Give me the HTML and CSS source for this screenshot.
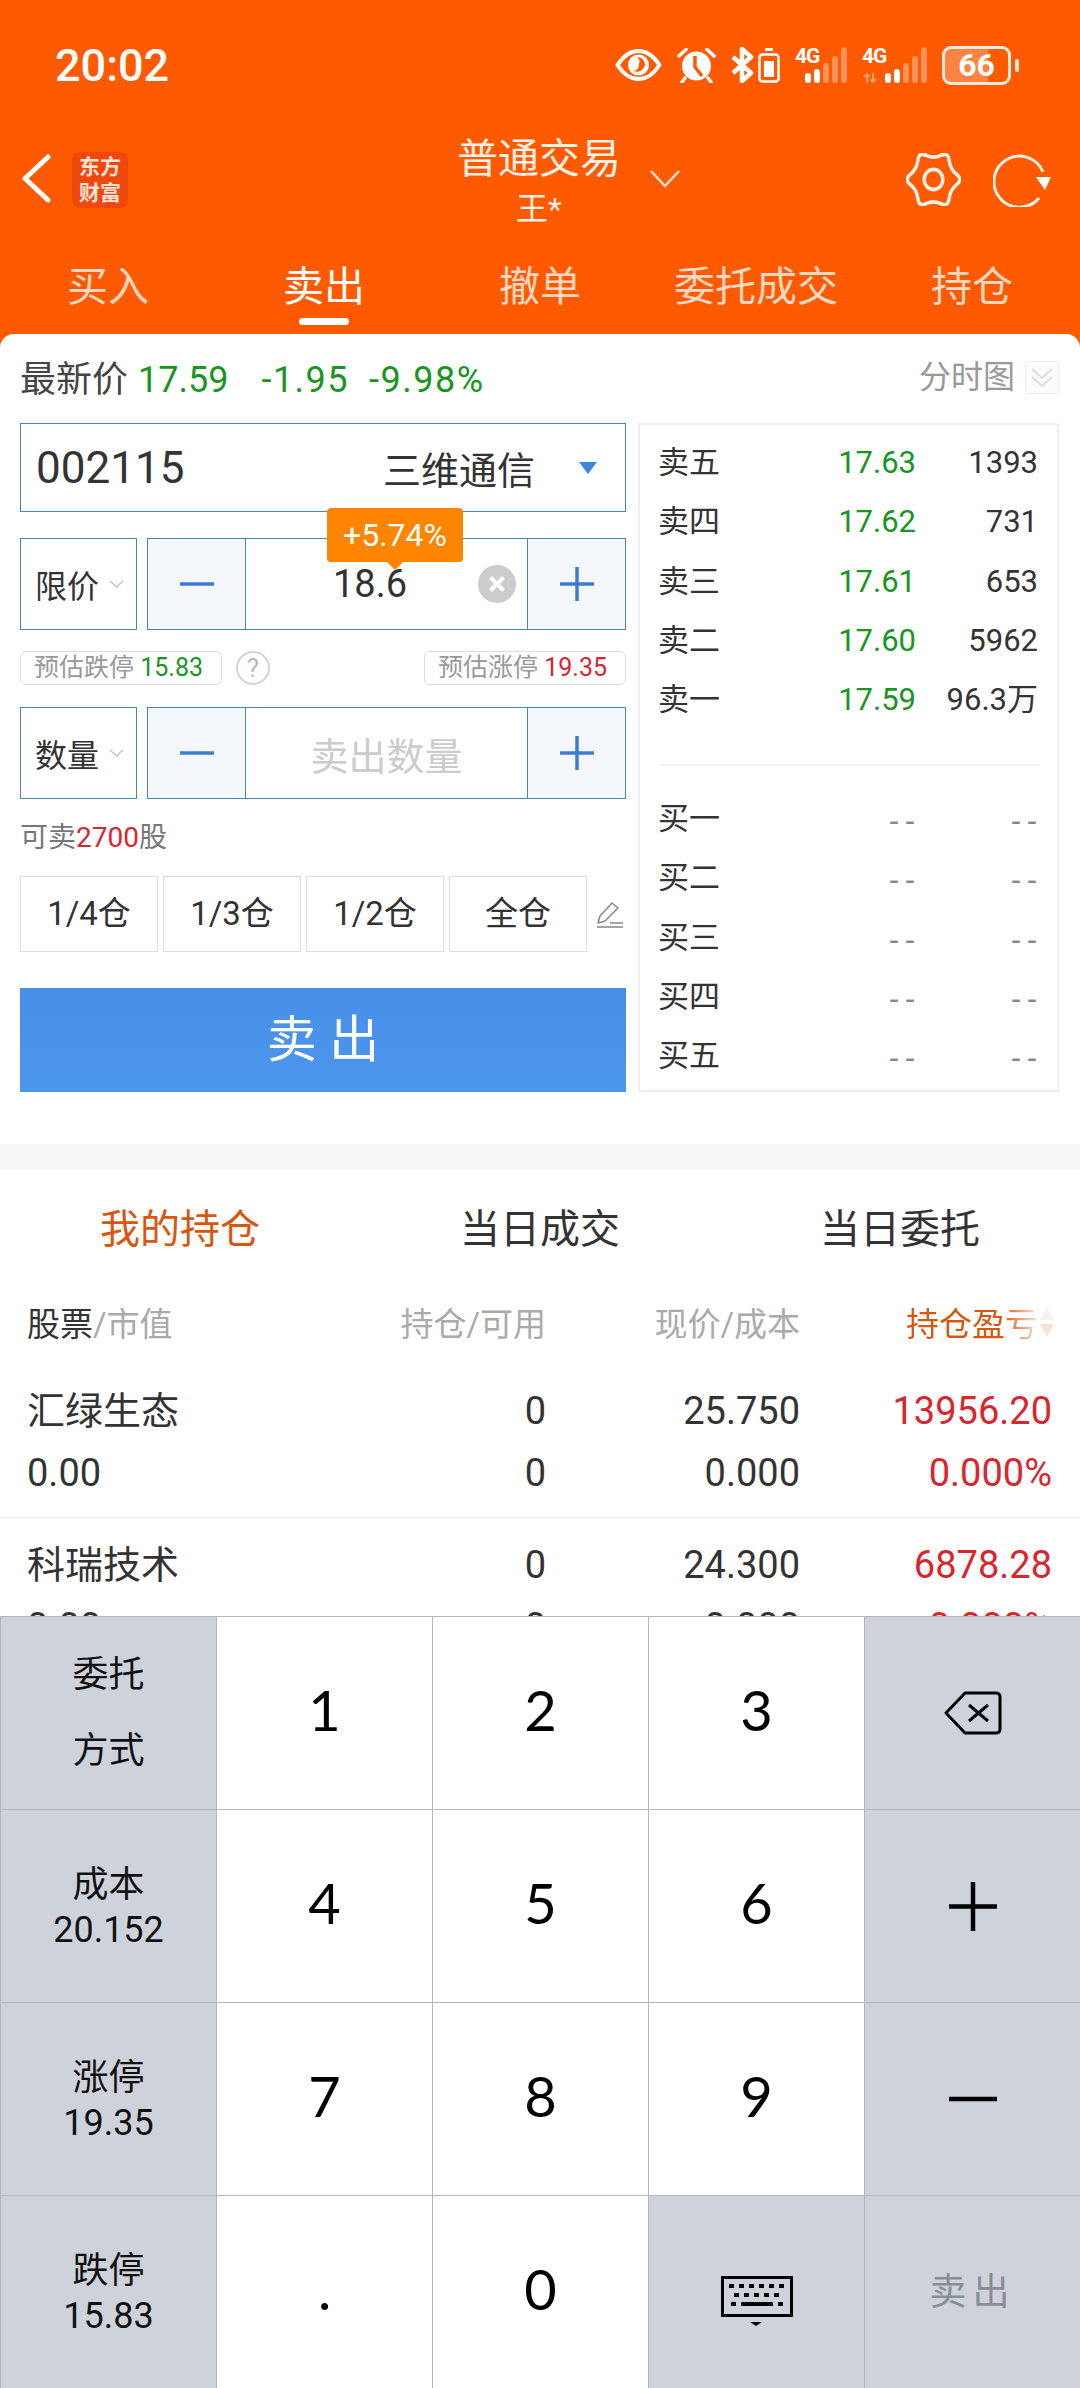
FILE: index.html
```html
<!DOCTYPE html>
<html lang="zh-CN">
<head>
    <meta charset="UTF-8">
    <meta name="viewport" content="width=device-width, initial-scale=1.0">
    <title>普通交易</title>
    <link rel="stylesheet" href="styles.css">
</head>
<body>

<div class="app">
    <div class="top">
        <div class="status">
            <div class="time">20:02</div>
            <div class="status-icons">
                <svg class="ic-eye" width="47" height="32" viewBox="0 0 47 32">
                    <path d="M2.5 16C9 6 16 2 23.5 2S38 6 44.500 16C38 26 31 30 23.500 30S9 26 2.500 16Z" fill="none" stroke="#fff" stroke-width="4" stroke-linejoin="round"/>
                    <circle cx="23.500" cy="16" r="10.500" fill="#fff"/>
                    <path d="M22 8a8 8 0 0 1 8 8 8 8 0 0 1-11 6 7 7 0 0 0 5-7 6 6 0 0 0-2-7Z" fill="#ff5a00"/>
                </svg>
                <svg class="ic-alarm" width="39" height="36" viewBox="0 0 39 36">
                    <circle cx="19.500" cy="19" r="14.500" fill="#fff"/>
                    <path d="M18 9v11l7 9" fill="none" stroke="#ff5a00" stroke-width="3.500"/>
                    <path d="M2 9 9 2.500M37 9 30 2.500M8 31l-3 4M31 31l3 4" fill="none" stroke="#fff" stroke-width="3.500" stroke-linecap="round"/>
                </svg>
                <div class="bt-group">
                    <svg width="23" height="36" viewBox="0 0 23 36">
                        <path d="M2 10 20 26 11 34V2l9 8L2 26" fill="none" stroke="#fff" stroke-width="4.500" stroke-linejoin="round"/>
                    </svg>
                    <svg width="22" height="36" viewBox="0 0 22 36">
                        <rect x="1.500" y="7.500" width="19" height="27" rx="3" fill="none" stroke="#fff" stroke-width="2.500"/>
                        <rect x="7" y="1" width="8" height="3" fill="#fff"/>
                        <rect x="6" y="14" width="10" height="16" fill="#fff"/>
                    </svg>
                </div>
                <div class="signal">
                    <span class="sig-label">4G</span>
                    <div class="bars">
                        <i class="b1"></i><i class="b2"></i><i class="b3 off"></i><i class="b4 off"></i><i class="b5 off"></i>
                    </div>
                </div>
                <div class="signal signal-two">
                    <span class="sig-label">4G</span>
                    <svg class="sig-arrows" width="14" height="10" viewBox="0 0 14 10">
                        <path d="M4 10V1M1 4 4 1 7 4M10 0V9M7 6 10 9 13 6" fill="none" stroke="#fff" stroke-opacity="0.4" stroke-width="2"/>
                    </svg>
                    <div class="bars">
                        <i class="b1"></i><i class="b2"></i><i class="b3 off"></i><i class="b4 off"></i><i class="b5 off"></i>
                    </div>
                </div>
                <div class="battery"><span>66</span></div>
            </div>
        </div>

        <div class="nav">
            <div class="nav-left">
                <svg width="30" height="50" viewBox="0 0 30 50">
                    <path d="M26 4 3 25.500 26 47" fill="none" stroke="#fff" stroke-width="5" stroke-linecap="round" stroke-linejoin="round"/>
                </svg>
                <div class="logo">东方<br>财富</div>
            </div>
            <div class="nav-title">
                <div class="title">普通交易</div>
                <div class="subtitle">王*</div>
            </div>
            <div class="nav-right">
                <svg class="title-arrow" width="30" height="18" viewBox="0 0 30 18">
                    <path d="M1 1 15 16 29 1" fill="none" stroke="#ffe3d2" stroke-width="2.500"/>
                </svg>
                <svg class="ic-gear" width="55" height="53" viewBox="-28 -25 56 50" preserveAspectRatio="none">
                    <path d="M23.450 -4.875Q30 0 23.450 4.875Q16.900 9.750 15.950 17.875Q15 26 7.500 22.750Q0 19.500 -7.500 22.750Q-15 26 -15.950 17.875Q-16.900 9.750 -23.450 4.875Q-30 0 -23.450 -4.875Q-16.900 -9.750 -15.950 -17.875Q-15 -26 -7.500 -22.750Q0 -19.500 7.500 -22.750Q15 -26 15.950 -17.875Q16.900 -9.750 23.450 -4.875Z" fill="none" stroke="#fff0e6" stroke-width="3.500"/>
                    <circle r="9.500" fill="none" stroke="#fff0e6" stroke-width="3.500"/>
                </svg>
                <svg class="ic-refresh" width="58" height="54" viewBox="0 0 58 54">
                    <path d="M50 19A25.500 25.500 0 1 0 46 45" fill="none" stroke="#fff0e6" stroke-width="3"/>
                    <path d="M43 24H58L52 37Z" fill="#fff"/>
                </svg>
            </div>
        </div>

        <div class="tabs">
            <div class="tab">买入</div>
            <div class="tab active">卖出<i class="tab-line"></i></div>
            <div class="tab">撤单</div>
            <div class="tab">委托成交</div>
            <div class="tab">持仓</div>
        </div>
    </div>

    <div class="main">
        <div class="card">
            <div class="quote">
                <span class="quote-label">最新价</span>
                <span class="quote-price">17.59</span>
                <span class="quote-change">-1.95</span>
                <span class="quote-pct">-9.98%</span>
                <span class="quote-chart">分时图</span>
                <svg class="quote-fold" width="34" height="33" viewBox="0 0 34 33">
                    <rect x="0.500" y="0.500" width="33" height="32" rx="2" fill="#fcfcfc" stroke="#eee"/>
                    <path d="M7 8 17 17 27 8M7 16 17 25 27 16" fill="none" stroke="#ddd" stroke-width="2"/>
                </svg>
            </div>

            <div class="trade">
                <div class="form">
                    <div class="code-box">
                        <span class="code">002115</span>
                        <span class="code-name">三维通信</span>
                        <i class="code-arrow"></i>
                    </div>

                    <div class="field field-price">
                        <div class="select">限价
                            <svg width="15" height="9" viewBox="0 0 15 9"><path d="M1 1 7.500 7 14 1" fill="none" stroke="#c4c4c4" stroke-width="1.500"/></svg>
                        </div>
                        <div class="stepper">
                            <div class="step">
                                <svg width="34" height="34" viewBox="0 0 34 34"><path d="M0 17H34" stroke="#3c7dd0" stroke-width="3.500"/></svg>
                            </div>
                            <div class="input input-price">
                                <div class="tip">+5.74%</div>
                                <span class="price-value">18.6</span>
                                <svg class="clear" width="38" height="38" viewBox="0 0 38 38">
                                    <circle cx="19" cy="19" r="19" fill="#ccc"/>
                                    <path d="M12.500 12.500 25.500 25.500M25.500 12.500 12.500 25.500" stroke="#fff" stroke-width="4"/>
                                </svg>
                            </div>
                            <div class="step">
                                <svg width="34" height="34" viewBox="0 0 34 34"><path d="M0 17H34M17 0V34" stroke="#3c7dd0" stroke-width="3.500"/></svg>
                            </div>
                        </div>
                    </div>

                    <div class="hints">
                        <div class="hint">预估跌停 <b class="green">15.83</b></div>
                        <div class="help">?</div>
                        <div class="hint hint-right">预估涨停 <b class="red">19.35</b></div>
                    </div>

                    <div class="field">
                        <div class="select">数量
                            <svg width="15" height="9" viewBox="0 0 15 9"><path d="M1 1 7.500 7 14 1" fill="none" stroke="#c4c4c4" stroke-width="1.500"/></svg>
                        </div>
                        <div class="stepper">
                            <div class="step">
                                <svg width="34" height="34" viewBox="0 0 34 34"><path d="M0 17H34" stroke="#3c7dd0" stroke-width="3.500"/></svg>
                            </div>
                            <div class="input input-qty">卖出数量</div>
                            <div class="step">
                                <svg width="34" height="34" viewBox="0 0 34 34"><path d="M0 17H34M17 0V34" stroke="#3c7dd0" stroke-width="3.500"/></svg>
                            </div>
                        </div>
                    </div>

                    <div class="avail">可卖<span class="red">2700</span>股</div>

                    <div class="ratios">
                        <div class="ratio">1/4仓</div>
                        <div class="ratio">1/3仓</div>
                        <div class="ratio">1/2仓</div>
                        <div class="ratio">全仓</div>
                        <svg class="ic-pencil" width="26" height="27" viewBox="0 0 26 27">
                            <path d="M1 22 3 15 15 2 21 7 8 20Z" fill="none" stroke="#888" stroke-width="1.500" stroke-linejoin="round"/>
                            <path d="M0 26H26M13 22H26" stroke="#888" stroke-width="1.500"/>
                        </svg>
                    </div>

                    <div class="sell-btn">卖 出</div>
                </div>

                <div class="book">
                    <div class="book-row"><span>卖五</span><span class="green">17.63</span><span>1393</span></div>
                    <div class="book-row"><span>卖四</span><span class="green">17.62</span><span>731</span></div>
                    <div class="book-row"><span>卖三</span><span class="green">17.61</span><span>653</span></div>
                    <div class="book-row"><span>卖二</span><span class="green">17.60</span><span>5962</span></div>
                    <div class="book-row"><span>卖一</span><span class="green">17.59</span><span>96.3万</span></div>
                    <div class="book-line"></div>
                    <div class="book-row"><span>买一</span><span class="dash">--</span><span class="dash">--</span></div>
                    <div class="book-row"><span>买二</span><span class="dash">--</span><span class="dash">--</span></div>
                    <div class="book-row"><span>买三</span><span class="dash">--</span><span class="dash">--</span></div>
                    <div class="book-row"><span>买四</span><span class="dash">--</span><span class="dash">--</span></div>
                    <div class="book-row"><span>买五</span><span class="dash">--</span><span class="dash">--</span></div>
                </div>
            </div>
        </div>

        <div class="stripe"></div>

        <div class="sub-tabs">
            <div class="sub-tab active">我的持仓</div>
            <div class="sub-tab">当日成交</div>
            <div class="sub-tab">当日委托</div>
        </div>

        <div class="hold-head">
            <div><span class="dark">股票</span>/市值</div>
            <div class="num">持仓/可用</div>
            <div class="num">现价/成本</div>
            <div class="num sort">
                <span class="sort-text">持仓盈亏</span>
                <svg width="14" height="30" viewBox="0 0 14 30">
                    <path d="M7 0 14 13H0Z" fill="#f3f3f3"/>
                    <path d="M0 17H14L7 30Z" fill="#f9e2d6"/>
                </svg>
            </div>
        </div>

        <div class="hold-row">
            <div>汇绿生态</div>
            <div class="num">0</div>
            <div class="num">25.750</div>
            <div class="num red">13956.20</div>
            <div>0.00</div>
            <div class="num">0</div>
            <div class="num">0.000</div>
            <div class="num red">0.000%</div>
        </div>
        <div class="hold-row">
            <div>科瑞技术</div>
            <div class="num">0</div>
            <div class="num">24.300</div>
            <div class="num red">6878.28</div>
            <div>0.00</div>
            <div class="num">0</div>
            <div class="num">0.000</div>
            <div class="num red">0.000%</div>
        </div>
    </div>

    <div class="keypad">
        <div class="key side two-line">委托<br>方式</div>
        <div class="key digit">1</div>
        <div class="key digit">2</div>
        <div class="key digit">3</div>
        <div class="key side icon-key">
            <svg width="58" height="44" viewBox="0 0 58 44">
                <path d="M2 22 21 2H52Q56 2 56 6V38Q56 42 52 42H21Z" fill="none" stroke="#000" stroke-width="3" stroke-linejoin="round"/>
                <path d="M25 14 44 30M44 14 25 30" stroke="#000" stroke-width="3"/>
            </svg>
        </div>

        <div class="key side">成本<br>20.152</div>
        <div class="key digit">4</div>
        <div class="key digit">5</div>
        <div class="key digit">6</div>
        <div class="key side icon-key">
            <svg width="48" height="49" viewBox="0 0 48 49"><path d="M0 24.500H48M24 0V49" stroke="#000" stroke-width="4.500"/></svg>
        </div>

        <div class="key side">涨停<br>19.35</div>
        <div class="key digit">7</div>
        <div class="key digit">8</div>
        <div class="key digit">9</div>
        <div class="key side icon-key">
            <svg width="48" height="6" viewBox="0 0 48 6"><path d="M0 3H48" stroke="#000" stroke-width="4.500"/></svg>
        </div>

        <div class="key side">跌停<br>15.83</div>
        <div class="key digit">.</div>
        <div class="key digit">0</div>
        <div class="key side icon-key">
            <svg class="ic-keyboard" width="72" height="51" viewBox="0 0 72 51">
                <rect x="1.500" y="1.500" width="69" height="38" fill="none" stroke="#000" stroke-width="3"/>
                <path d="M8 8h5v4H8zM18 8h5v4h-5zM28 8h5v4h-5zM38 8h5v4h-5zM48 8h5v4h-5zM58 8h5v4h-5zM13 17h5v4h-5zM23 17h5v4h-5zM33 17h5v4h-5zM43 17h5v4h-5zM53 17h5v4h-5zM10 26h5v4h-5zM20 26h32v4H20zM57 26h5v4h-5z"/>
                <path d="M29 46H41L35 50Z"/>
            </svg>
        </div>
        <div class="key side sell-key">卖出</div>
    </div>
</div>

</body>
</html>
```

FILE: styles.css
```css
* {
    box-sizing: border-box;
}
body {
    margin: 0;
    background: #fff;
    font-family: Roboto, "Noto Sans CJK SC", sans-serif;
    color: #333;
}
.app {
    width: 1080px;
    height: 2388px;
    display: flex;
    flex-direction: column;
    overflow: hidden;
}
.green {
    color: #18961f;
}
.red {
    color: #d9262e;
}

/* orange header */
.top {
    background: #ff5a00;
    height: 348px;
    flex: none;
    color: #fff;
}
.status {
    height: 130px;
    display: flex;
    align-items: center;
    justify-content: space-between;
    padding: 0 61px 0 55px;
}
.time {
    font-size: 45px;
    font-weight: 500;
}
.status-icons {
    display: flex;
    align-items: center;
    gap: 15px;
}
.bt-group {
    display: flex;
    gap: 4px;
}
.signal {
    display: flex;
    align-items: flex-end;
    height: 36px;
    position: relative;
    width: 52px;
}
.signal-two {
    width: 65px;
}
.sig-label {
    font-size: 21px;
    line-height: 18px;
    font-weight: 700;
    align-self: flex-start;
    letter-spacing: -1px;
}
.sig-arrows {
    position: absolute;
    left: 1px;
    bottom: 0;
}
.bars {
    display: flex;
    align-items: flex-end;
    gap: 3px;
    position: absolute;
    right: 0;
    bottom: 0;
}
.bars i {
    display: block;
    width: 6px;
    border-radius: 3px;
    background: #fff;
}
.bars .off {
    background: rgba(255, 255, 255, 0.35);
}
.b1 { height: 10px; }
.b2 { height: 14px; }
.b3 { height: 20px; }
.b4 { height: 27px; }
.b5 { height: 36px; }
.battery {
    width: 69px;
    height: 39px;
    margin-right: 8px;
    border: 3px solid #ffe9dc;
    border-radius: 9px;
    position: relative;
    display: flex;
    align-items: center;
    justify-content: center;
    background: linear-gradient(90deg, rgba(255, 255, 255, 0.25) 68%, transparent 68%);
    font-size: 32px;
    font-weight: 700;
}
.battery::after {
    content: "";
    position: absolute;
    right: -11px;
    top: 10px;
    width: 4px;
    height: 13px;
    border-radius: 2px;
    background: #ffe9dc;
}

.nav {
    height: 105px;
    display: grid;
    grid-template-columns: 459px 160px 1fr;
}
.nav-left {
    display: flex;
    align-items: center;
    padding: 0 0 10px 22px;
}
.logo {
    width: 56px;
    height: 56px;
    margin-left: 20px;
    margin-top: 4px;
    border-radius: 8px;
    background: #f0470f;
    color: #fde3d5;
    font-size: 21px;
    font-weight: 700;
    line-height: 26px;
    padding-top: 2px;
    text-align: center;
}
.nav-title {
    text-align: center;
    padding-top: 4px;
    white-space: nowrap;
}
.title {
    font-size: 41px;
    line-height: 50px;
    margin: 0 -2px;
    color: #fff0e6;
}
.subtitle {
    font-size: 32px;
    line-height: 50px;
    color: #fff0e6;
}
.nav-right {
    display: flex;
    align-items: flex-start;
    padding: 23px 29px 0 31px;
}
.title-arrow {
    margin-top: 17px;
    margin-right: auto;
}
.ic-refresh {
    margin-left: 32px;
}
.tabs {
    display: grid;
    grid-template-columns: repeat(5, 216px);
}
.tab {
    display: flex;
    flex-direction: column;
    align-items: center;
    padding-top: 27px;
    font-size: 41px;
    line-height: 50px;
    color: #ffd8c2;
}
.tab.active {
    color: #fff;
}
.tab-line {
    display: block;
    width: 50px;
    height: 7px;
    margin-top: 6px;
    border-radius: 4px;
    background: #fff;
}

/* trade card */
.main {
    flex: 1;
    min-height: 0;
    overflow: hidden;
    margin-top: -14px;
    background: #fff;
    border-radius: 14px 14px 0 0;
    position: relative;
}
.quote {
    height: 89px;
    display: flex;
    align-items: center;
    padding: 3px 21px 0 20px;
    font-size: 36px;
    line-height: 44px;
    color: #18961f;
}
.quote-label {
    color: #444;
    margin-right: 10px;
}
.quote-change,
.quote-pct {
    letter-spacing: 1.500px;
}
.quote-change {
    margin-left: 33px;
}
.quote-pct {
    margin-left: 20px;
}
.quote-chart {
    margin-left: auto;
    margin-top: -6px;
    font-size: 32px;
    color: #999;
}
.quote-fold {
    margin-left: 10px;
    margin-top: -6px;
}
.trade {
    display: flex;
    gap: 12px;
    padding: 0 21px 0 20px;
}
.form {
    width: 606px;
}
.code-box {
    height: 89px;
    display: flex;
    align-items: center;
    border: 1px solid #4a86ad;
    padding: 0 28px 0 15px;
}
.code {
    font-size: 44px;
}
.code-name {
    font-size: 38px;
    margin-left: auto;
    margin-right: 44px;
}
.code-arrow {
    width: 0;
    height: 0;
    border-left: 9px solid transparent;
    border-right: 9px solid transparent;
    border-top: 12px solid #3d85d8;
}
.field {
    height: 92px;
    display: flex;
    gap: 10px;
}
.field-price {
    margin-top: 26px;
}
.select {
    width: 117px;
    display: flex;
    align-items: center;
    gap: 10px;
    border: 1px solid #4a86ad;
    padding-left: 14px;
    font-size: 32px;
    white-space: nowrap;
}
.stepper {
    flex: 1;
    display: flex;
    border: 1px solid #4a86ad;
}
.step {
    width: 97px;
    flex: none;
    display: flex;
    align-items: center;
    justify-content: center;
    background: #f4f8fd;
}
.input {
    flex: 1;
    display: flex;
    align-items: center;
    border-left: 1px solid #4a86ad;
    border-right: 1px solid #4a86ad;
}
.input-price {
    position: relative;
    padding: 0 11px 0 87px;
}
.price-value {
    font-size: 38px;
}
.clear {
    margin-left: auto;
}
.input-qty {
    justify-content: center;
    font-size: 38px;
    color: #ccc;
}
.tip {
    position: absolute;
    left: 81px;
    top: -31px;
    width: 136px;
    height: 54px;
    border-radius: 4px;
    background: #ff8400;
    color: #fff;
    font-size: 32px;
    line-height: 54px;
    text-align: center;
}
.tip::after {
    content: "";
    position: absolute;
    left: 60px;
    bottom: -8px;
    border-left: 8px solid transparent;
    border-right: 8px solid transparent;
    border-top: 8px solid #ff8400;
}
.hints {
    height: 34px;
    margin: 21px 0 22px;
    display: flex;
    align-items: center;
}
.hint {
    width: 202px;
    height: 34px;
    padding-left: 13px;
    border: 1px solid #ddd;
    border-radius: 6px;
    font-size: 25px;
    line-height: 32px;
    color: #999;
    white-space: nowrap;
}
.hint b {
    font-weight: 400;
}
.hint-right {
    margin-left: auto;
}
.help {
    width: 34px;
    height: 34px;
    margin-left: 14px;
    border: 2px solid #d4d4d4;
    border-radius: 50%;
    color: #bbb;
    font-size: 26px;
    line-height: 30px;
    text-align: center;
}
.avail {
    margin-top: 19px;
    height: 40px;
    font-size: 28px;
    line-height: 40px;
    color: #777;
}
.ratios {
    margin-top: 18px;
    display: flex;
    align-items: center;
    gap: 5px;
}
.ratio {
    width: 138px;
    height: 76px;
    border: 1px solid #ddd;
    font-size: 33px;
    line-height: 74px;
    text-align: center;
}
.ic-pencil {
    margin-left: 5px;
}
.sell-btn {
    height: 104px;
    margin-top: 36px;
    background: linear-gradient(#488ee8, #4c96ed);
    color: #fff;
    font-size: 50px;
    line-height: 104px;
    text-align: center;
}
.book {
    width: 421px;
    height: 669px;
    border: 2px solid #eee;
    padding: 8.500px 19px 0 18px;
    font-size: 31px;
    line-height: 44px;
}
.book-row {
    height: 59.250px;
    display: grid;
    grid-template-columns: 1fr 103px 122px;
    align-items: center;
}
.book-row span + span {
    text-align: right;
}
.book .dash {
    font-family: "Noto Sans", sans-serif;
    color: #888;
    letter-spacing: 6px;
    margin-right: -5px;
}
.book-line {
    height: 2px;
    margin: 33.800px -2px 24px 1px;
    background: #f2f2f2;
}
.stripe {
    height: 26px;
    margin-top: 52px;
    background: #f6f7f9;
}

/* holdings */
.sub-tabs {
    height: 114px;
    padding-bottom: 3px;
    display: grid;
    grid-template-columns: repeat(3, 360px);
    align-items: center;
    text-align: center;
    font-size: 40px;
}
.sub-tab.active {
    color: #d9560f;
}
.hold-head,
.hold-row {
    display: grid;
    grid-template-columns: 1fr 170px 254px 252px;
    padding: 0 28px 0 27px;
}
.hold-head {
    height: 80px;
    padding-bottom: 4px;
    align-items: center;
    font-size: 33px;
    color: #aaa;
}
.dark {
    color: #333;
}
.num {
    text-align: right;
    white-space: nowrap;
}
.sort {
    display: flex;
    justify-content: flex-end;
    align-items: center;
    gap: 2px;
    margin-right: -2px;
}
.sort-text {
    background: linear-gradient(90deg, #d9560f 72%, #f7e3d8 100%);
    -webkit-background-clip: text;
    background-clip: text;
    color: transparent;
}
.hold-row {
    padding-top: 16px;
    padding-bottom: 13px;
    border-bottom: 1px solid #eee;
    font-size: 38px;
    line-height: 62px;
}

/* number pad */
.keypad {
    flex: none;
    height: 772px;
    position: relative;
    display: grid;
    grid-template-columns: repeat(5, 216px);
    grid-template-rows: repeat(4, 193px);
    background: #fff;
}
.key {
    display: flex;
    align-items: center;
    justify-content: center;
    text-align: center;
    border-top: 1px solid #b3b6bb;
    border-left: 1px solid #b3b6bb;
}
.side {
    display: block;
    align-content: center;
    padding-top: 3px;
    background: #ced3db;
    color: #111;
    font-size: 36px;
    line-height: 45px;
}
.icon-key {
    display: flex;
    padding-top: 0;
}
.two-line {
    padding-top: 0;
    line-height: 76px;
}
.digit {
    padding-bottom: 7px;
    font-family: Lato, Roboto, sans-serif;
    font-size: 56px;
    color: #000;
}
.sell-key {
    padding-top: 0;
    font-size: 37px;
    letter-spacing: 6px;
    color: #8a8d92;
}
.ic-keyboard {
    margin-top: 18px;
}
```
